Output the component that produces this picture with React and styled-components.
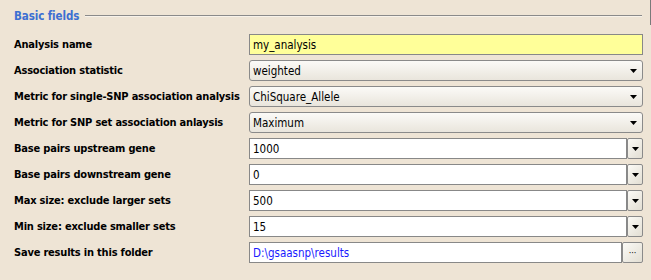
import React from 'react'
import styled, { createGlobalStyle } from 'styled-components'

const GlobalStyle = createGlobalStyle`
    html, body {
        margin: 0;
        padding: 0;
        background: #eee4d5;
    }
`

const Panel = styled.div`
    width: 651px;
    height: 280px;
    box-sizing: border-box;
    background: #eee4d5;
    font-family: 'DejaVu Sans Condensed', 'DejaVu Sans', sans-serif;
    font-size: 11px;
    color: #000;
`

const Legend = styled.div`
    display: flex;
    align-items: center;
    gap: 6px;
    height: 25px;
    padding: 6px 8px 0 14px;
    box-sizing: border-box;
    border-right: 1px solid #7a7a7a;
`

const LegendText = styled.span`
    color: #3c6fd2;
    font-weight: bold;
    font-size: 11.5px;
    letter-spacing: -0.1px;
`

const LegendRule = styled.div`
    flex: 1;
    height: 1px;
    background: #8a8a8a;
    border-bottom: 1px solid #f7f2ea;
`

const Fields = styled.div`
    display: grid;
    grid-template-columns: 235px 394px;
    grid-auto-rows: 21px;
    row-gap: 5px;
    padding-left: 14px;
    padding-top: 9px;
`

const Label = styled.div`
    display: flex;
    align-items: center;
    font-weight: bold;
    letter-spacing: -0.2px;
    white-space: nowrap;
`

const Field = styled.div`
    display: flex;
    align-items: center;
    box-sizing: border-box;
    height: 21px;
    padding-left: 3px;
    border: 1px solid #888;
    background: ${props => props.yellow ? '#ffff99' : '#fff'};
    color: ${props => props.path ? '#1a1aff' : '#000'};
    font-size: 11.5px;
    flex: 1;
    white-space: nowrap;
`

const Combo = styled.div`
    display: flex;
    align-items: center;
    justify-content: space-between;
    box-sizing: border-box;
    height: 21px;
    padding: 0 5px 0 3px;
    border: 1px solid #8a8a8a;
    border-radius: 3px;
    background: linear-gradient(#fbfaf7, #e9e5dc);
    font-size: 11.5px;
`

const Line = styled.div`
    display: flex;
    align-items: stretch;
`

const SideButton = styled.div`
    display: flex;
    align-items: center;
    justify-content: center;
    box-sizing: border-box;
    width: ${props => props.wide ? '21px' : '16px'};
    height: 21px;
    border: 1px solid #8a8a8a;
    border-radius: 2px;
    background: linear-gradient(135deg, #fbfaf6, #e2ded3);
    font-size: 9px;
`

const Arrow = () => (
    <svg width="7" height="4" viewBox="0 0 7 4">
        <path d="M0 0 H7 L3.5 4 Z" fill="#000" />
    </svg>
)

const rows = [
    { label: 'Analysis name', kind: 'text', value: 'my_analysis', yellow: true },
    { label: 'Association statistic', kind: 'select', value: 'weighted' },
    { label: 'Metric for single-SNP association analysis', kind: 'select', value: 'ChiSquare_Allele' },
    { label: 'Metric for SNP set association anlaysis', kind: 'select', value: 'Maximum' },
    { label: 'Base pairs upstream gene', kind: 'edit', value: '1000' },
    { label: 'Base pairs downstream gene', kind: 'edit', value: '0' },
    { label: 'Max size: exclude larger sets', kind: 'edit', value: '500' },
    { label: 'Min size: exclude smaller sets', kind: 'edit', value: '15' },
    { label: 'Save results in this folder', kind: 'folder', value: 'D:\\gsaasnp\\results' },
]

const Control = ({ row }) => {
    if (row.kind === 'select') {
        return <Combo><span>{row.value}</span><Arrow /></Combo>
    }
    if (row.kind === 'edit') {
        return (
            <Line>
                <Field>{row.value}</Field>
                <SideButton><Arrow /></SideButton>
            </Line>
        )
    }
    if (row.kind === 'folder') {
        return (
            <Line>
                <Field path>{row.value}</Field>
                <SideButton wide>···</SideButton>
            </Line>
        )
    }
    return <Line><Field yellow={row.yellow}>{row.value}</Field></Line>
}

export default function App() {
    return (
        <Panel>
            <GlobalStyle />
            <Legend>
                <LegendText>Basic fields</LegendText>
                <LegendRule />
            </Legend>
            <Fields>
                {rows.map(row => (
                    <React.Fragment key={row.label}>
                        <Label>{row.label}</Label>
                        <Control row={row} />
                    </React.Fragment>
                ))}
            </Fields>
        </Panel>
    )
}
